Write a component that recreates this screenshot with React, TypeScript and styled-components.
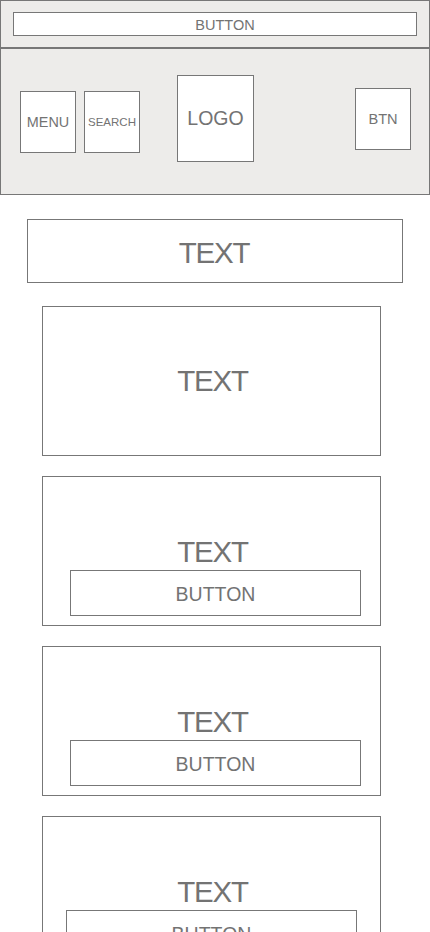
import React from "react";
import styled, { createGlobalStyle } from "styled-components";

const GlobalStyle = createGlobalStyle`
  html, body {
    margin: 0;
    padding: 0;
    background: #ffffff;
  }
  body {
    font-family: "Liberation Sans", Arial, sans-serif;
    color: #777777;
  }
  * { box-sizing: border-box; }
`;

const LINE = "#777777";
const PANEL = "#edecea";
const INK = "#737373";

const Page = styled.div`
  width: 430px;
  display: flex;
  flex-direction: column;
`;

const TopBar = styled.div`
  height: 48px;
  border: 1px solid ${LINE};
  background: ${PANEL};
  padding: 11px 12px;
`;

const WideButton = styled.div`
  height: 24px;
  border: 1px solid ${LINE};
  background: #ffffff;
  display: flex;
  align-items: center;
  justify-content: center;
  padding: 1px 0 0 20px;
  font-size: 14.5px;
  color: ${INK};
`;

const Header = styled.div`
  height: 147px;
  border: 1px solid ${LINE};
  background: ${PANEL};
  display: flex;
  align-items: flex-start;
  padding-left: 19px;
`;

const NavBox = styled.div<{ $w: number; $h: number; $top: number; $left: number; $size: number }>`
  width: ${(p) => p.$w}px;
  height: ${(p) => p.$h}px;
  margin-top: ${(p) => p.$top}px;
  margin-left: ${(p) => p.$left}px;
  border: 1px solid ${LINE};
  background: #ffffff;
  display: flex;
  align-items: center;
  justify-content: center;
  font-size: ${(p) => p.$size}px;
  color: ${INK};
  flex-shrink: 0;
`;

const Banner = styled.div`
  width: 376px;
  height: 64px;
  margin: 24px 0 0 27px;
  border: 1px solid ${LINE};
  display: flex;
  align-items: center;
  justify-content: center;
  padding-top: 3px;
`;

const Heading = styled.div<{ $shift: number }>`
  font-size: 29.5px;
  line-height: 32px;
  letter-spacing: -1.2px;
  color: ${INK};
  text-align: center;
  padding-left: ${(p) => Math.max(p.$shift, 0) * 2}px;
  padding-right: ${(p) => Math.max(-p.$shift, 0) * 2}px;
`;

const Card = styled.div<{ $gap: number; $centered?: boolean }>`
  width: 339px;
  height: 150px;
  margin: ${(p) => p.$gap}px 0 0 42px;
  border: 1px solid ${LINE};
  display: flex;
  flex-direction: column;
  flex-shrink: 0;
  ${(p) =>
    p.$centered
      ? `align-items: center; justify-content: center;`
      : `padding-top: 59px;`}
`;

const CardButton = styled.div<{ $inset: number }>`
  width: 291px;
  height: 46px;
  margin: 2px 0 0 ${(p) => p.$inset - 1}px;
  border: 1px solid ${LINE};
  display: flex;
  align-items: center;
  justify-content: center;
  padding-top: 3px;
  font-size: 19.5px;
  color: ${INK};
`;

const cards = [
  { gap: 20, inset: 28 },
  { gap: 20, inset: 28 },
  { gap: 20, inset: 24 },
];

export default function App() {
  return (
    <Page>
      <GlobalStyle />
      <TopBar>
        <WideButton>BUTTON</WideButton>
      </TopBar>
      <Header>
        <NavBox $w={56} $h={62} $top={42} $left={0} $size={14.4}>MENU</NavBox>
        <NavBox $w={56} $h={62} $top={42} $left={8} $size={11.5}>SEARCH</NavBox>
        <NavBox $w={77} $h={87} $top={26} $left={37} $size={19.5}>LOGO</NavBox>
        <NavBox $w={56} $h={62} $top={39} $left={101} $size={14.6}>BTN</NavBox>
      </Header>
      <Banner>
        <Heading $shift={-1}>TEXT</Heading>
      </Banner>
      <Card $gap={23} $centered>
        <Heading $shift={1}>TEXT</Heading>
      </Card>
      {cards.map((c, i) => (
        <Card key={i} $gap={c.gap}>
          <Heading $shift={1}>TEXT</Heading>
          <CardButton $inset={c.inset}>BUTTON</CardButton>
        </Card>
      ))}
    </Page>
  );
}
